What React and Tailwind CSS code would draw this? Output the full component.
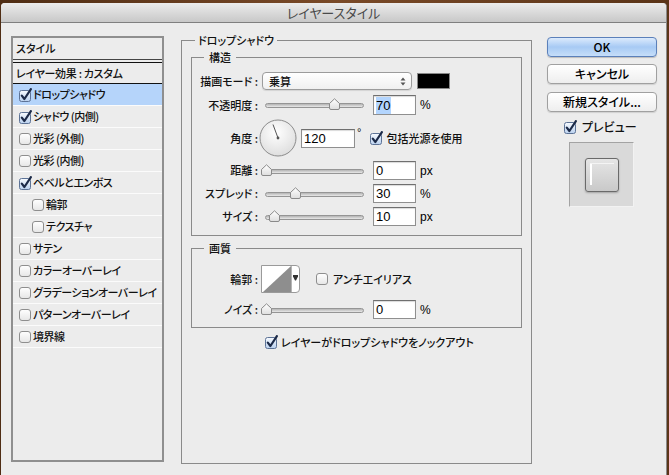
import React from "react";

function CheckOn() {
  return (
    <svg width="14" height="14" viewBox="0 0 14 14" className="shrink-0">
      <defs>
        <linearGradient id="cbOn" x1="0" y1="0" x2="0" y2="1">
          <stop offset="0" stopColor="#f8fbff" />
          <stop offset="1" stopColor="#b9d0ee" />
        </linearGradient>
      </defs>
      <rect x="0.5" y="2.5" width="11" height="11" rx="2" fill="url(#cbOn)" stroke="#5d7396" />
      <path d="M2.8 7.6 L5.4 11 L11.9 1.1" fill="none" stroke="#1c2a48" strokeWidth="2.2" strokeLinecap="round" strokeLinejoin="round" />
    </svg>
  );
}

function CheckOff() {
  return (
    <svg width="12" height="12" viewBox="0 0 12 12" className="shrink-0">
      <defs>
        <linearGradient id="cbOff" x1="0" y1="0" x2="0" y2="1">
          <stop offset="0" stopColor="#ffffff" />
          <stop offset="1" stopColor="#e6e6e6" />
        </linearGradient>
      </defs>
      <rect x="0.5" y="0.5" width="11" height="11" rx="2.5" fill="url(#cbOff)" stroke="#8e8e8e" />
    </svg>
  );
}

function Slider({ thumb }) {
  return (
    <div className="relative h-[12px] w-[107px] shrink-0">
      <div className="absolute left-[4px] right-[4px] top-[4px] h-[5px] rounded-full border border-[#959595] bg-gradient-to-b from-[#b4b4b4] to-[#e9e9e9]" />
      <svg className={"absolute top-[-1px] " + thumb} width="11" height="12" viewBox="0 0 11 12">
        <defs>
          <linearGradient id="thg" x1="0" y1="0" x2="0" y2="1">
            <stop offset="0" stopColor="#ffffff" />
            <stop offset="1" stopColor="#dedede" />
          </linearGradient>
        </defs>
        <path d="M0.5 5.5 L5.5 0.8 L10.5 5.5 L10.5 10 Q10.5 11.5 9 11.5 L2 11.5 Q0.5 11.5 0.5 10 Z" fill="url(#thg)" stroke="#8a8a8a" />
      </svg>
    </div>
  );
}

function NumInput({ children, w = "w-[43px]", h = "h-[19px]" }) {
  return (
    <div className={"flex shrink-0 items-center border border-[#8f8f8f] border-t-[#6f6f6f] bg-white pl-[2px] font-['Liberation_Sans',Arial,sans-serif] text-[13px] leading-none text-black shadow-[inset_0_1px_1px_rgba(0,0,0,0.15)] " + w + " " + h}>
      {children}
    </div>
  );
}

function Unit({ children }) {
  return <span className="ml-[4px] font-['Liberation_Sans',Arial,sans-serif] text-[12px] text-black">{children}</span>;
}

function Label({ children }) {
  return <div className="w-[66px] shrink-0 whitespace-nowrap text-right text-[11px] font-medium leading-none">{children}</div>;
}

function SliderRow({ label, thumb, value, unit, mt = "mt-[4px]" }) {
  return (
    <div className={"flex h-[19px] items-center " + mt}>
      <Label>{label}</Label>
      <div className="ml-[3px]">
        <Slider thumb={thumb} />
      </div>
      <div className="ml-[5px]">
        <NumInput>{value}</NumInput>
      </div>
      <Unit>{unit}</Unit>
    </div>
  );
}

function ListRow({ checked, label, selected, indent }) {
  return (
    <div className={"flex h-[22px] items-center border-b border-[#fbfbfb] " + (selected ? "bg-[#b5d4fa] " : "") + (indent ? "pl-[19px]" : "pl-[6px]")}>
      {checked ? <CheckOn /> : <CheckOff />}
      <span className={"whitespace-nowrap text-[11px] font-medium leading-none tracking-[-0.5px] " + (checked ? "ml-[0px]" : "ml-[2px]")}>{label}</span>
    </div>
  );
}

function Button({ children, primary }) {
  return (
    <div
      className={
        "flex h-[20px] items-center justify-center rounded-[4px] border text-[12px] font-medium leading-none text-black " +
        (primary
          ? "border-[#5b80ba] bg-gradient-to-b from-[#dceafc] via-[#a7caf4] to-[#c6def9] shadow-[0_1px_1px_rgba(0,0,0,0.2)]"
          : "border-[#a0a0a0] bg-gradient-to-b from-white to-[#eeeeee] shadow-[0_1px_1px_rgba(0,0,0,0.12)]")
      }
    >
      {children}
    </div>
  );
}

export default function App() {
  return (
    <div className="h-[475px] w-[669px] overflow-hidden bg-gradient-to-r from-[#4f2d14] via-[#7a4a28] to-[#5a3418] pl-[1px] pr-[2px] pt-[3px] font-['Noto_Sans_CJK_JP',sans-serif] text-[#111] [font-feature-settings:'palt']">
      <div className="flex h-full flex-col rounded-t-[4px] border-r border-[#8a8a8a] bg-[#ececec]">
        <div className="flex h-[20px] shrink-0 items-center justify-center rounded-t-[4px] border-b border-[#7f7f7f] bg-gradient-to-b from-[#ececec] to-[#c8c8c8] text-[13px] leading-none text-[#4a4a4a]">
          レイヤースタイル
        </div>

        <div className="flex items-start">
          {/* Left list panel */}
          <div className="ml-[10px] mt-[13px] h-[426px] w-[153px] shrink-0 border-2 border-[#8f8f8f]">
            <div className="flex h-[21px] items-center pl-[3px] text-[11px] font-medium leading-none">スタイル</div>
            <div className="h-[1px] bg-[#444]" />
            <div className="h-[2px]" />
            <div className="h-[1px] bg-[#111]" />
            <div className="flex h-[21px] items-center whitespace-nowrap border-b border-[#111] pl-[3px] text-[11px] font-medium leading-none tracking-[-0.3px]">
              レイヤー効果 : カスタム
            </div>
            <ListRow checked selected label="ドロップシャドウ" />
            <ListRow checked label="シャドウ (内側)" />
            <ListRow label="光彩 (外側)" />
            <ListRow label="光彩 (内側)" />
            <ListRow checked label="ベベルとエンボス" />
            <ListRow indent label="輪郭" />
            <ListRow indent label="テクスチャ" />
            <ListRow label="サテン" />
            <ListRow label="カラーオーバーレイ" />
            <ListRow label="グラデーションオーバーレイ" />
            <ListRow label="パターンオーバーレイ" />
            <ListRow label="境界線" />
          </div>

          {/* Center */}
          <fieldset className="ml-[17px] mt-[10px] h-[431px] w-[351px] min-w-0 shrink-0 border border-[#8a8a8a] px-[9px]">
            <legend className="ml-[4px] px-[3px] text-[11px] font-medium leading-[14px]">ドロップシャドウ</legend>

            <fieldset className="mt-[3px] min-w-0 border border-[#8a8a8a] pb-[9px]">
              <legend className="ml-[12px] px-[5px] text-[11px] font-medium leading-[14px]">構造</legend>

              <div className="mt-[8px] flex h-[18px] items-center">
                <Label>描画モード :</Label>
                <div className="ml-[4px] flex h-[18px] w-[150px] items-center justify-between rounded-[4px] border border-[#9c9c9c] bg-gradient-to-b from-white to-[#f0f0f0] pl-[6px] pr-[5px] shadow-[0_1px_1px_rgba(0,0,0,0.1)]">
                  <span className="text-[11px] font-medium leading-none">乗算</span>
                  <svg width="6" height="9" viewBox="0 0 6 9">
                    <path d="M0.5 3.5 L3 0.5 L5.5 3.5 Z" fill="#555" />
                    <path d="M0.5 5.5 L3 8.5 L5.5 5.5 Z" fill="#555" />
                  </svg>
                </div>
                <div className="ml-[5px] h-[16px] w-[33px] border border-[#888] bg-black" />
              </div>

              <div className="mt-[5px] flex h-[20px] items-center">
                <Label>不透明度 :</Label>
                <div className="ml-[3px]">
                  <Slider thumb="left-[68px]" />
                </div>
                <div className="ml-[5px]">
                  <NumInput h="h-[20px]">
                    <span className="bg-[#b3d5fe] py-[2px] pr-[1px]">70</span>
                  </NumInput>
                </div>
                <Unit>%</Unit>
              </div>

              <div className="mt-[4px] flex h-[38px] items-center">
                <Label>角度 :</Label>
                <svg className="ml-[1px] shrink-0" width="38" height="38" viewBox="0 0 38 38">
                  <defs>
                    <radialGradient id="dialg" cx="0.45" cy="0.35" r="0.75">
                      <stop offset="0" stopColor="#ffffff" />
                      <stop offset="1" stopColor="#d9d9d9" />
                    </radialGradient>
                  </defs>
                  <circle cx="19" cy="19" r="18" fill="url(#dialg)" stroke="#8c8c8c" />
                  <line x1="19" y1="19" x2="14" y2="5.5" stroke="#555" strokeWidth="1" />
                  <circle cx="19" cy="19" r="1.4" fill="#555" />
                </svg>
                <div className="ml-[4px]">
                  <NumInput w="w-[54px]">120</NumInput>
                </div>
                <span className="ml-[2px] mt-[8px] self-start font-['Liberation_Sans',Arial,sans-serif] text-[11px] leading-none">°</span>
                <div className="ml-[9px] flex items-center">
                  <CheckOn />
                  <span className="ml-[2px] text-[11px] font-medium leading-none">包括光源を使用</span>
                </div>
              </div>

              <SliderRow label="距離 :" thumb="left-[0px]" value="0" unit="px" />
              <SliderRow label="スプレッド :" thumb="left-[29px]" value="30" unit="%" />
              <SliderRow label="サイズ :" thumb="left-[8px]" value="10" unit="px" />
            </fieldset>

            <fieldset className="mt-[5px] min-w-0 border border-[#8a8a8a] pb-[8px]">
              <legend className="ml-[12px] px-[5px] text-[11px] font-medium leading-[14px]">画質</legend>

              <div className="mt-[10px] flex h-[28px] items-center">
                <Label>輪郭 :</Label>
                <div className="ml-[3px] flex h-[28px] w-[39px] shrink-0 rounded-r-[4px] border border-[#9a9a9a] bg-white">
                  <svg width="29" height="26" viewBox="0 0 29 26" className="shrink-0">
                    <rect x="0" y="0" width="29" height="26" fill="#fff" />
                    <polygon points="1,26 29,0 29,26" fill="#8e8e8e" />
                  </svg>
                  <div className="flex flex-1 items-start justify-center border-l border-[#b5b5b5] pt-[9px]">
                    <svg width="5" height="6" viewBox="0 0 5 6">
                      <path d="M0 0 H5 V1.5 L3 5.5 H2 L0 1.5 Z" fill="#333" />
                    </svg>
                  </div>
                </div>
                <div className="ml-[16px] flex items-center">
                  <CheckOff />
                  <span className="ml-[5px] text-[11px] font-medium leading-none">アンチエイリアス</span>
                </div>
              </div>

              <SliderRow label="ノイズ :" thumb="left-[0px]" value="0" unit="%" mt="mt-[7px]" />
            </fieldset>

            <div className="ml-[74px] mt-[7px] flex items-center">
              <CheckOn />
              <span className="ml-[2px] text-[11px] font-medium leading-none">レイヤーがドロップシャドウをノックアウト</span>
            </div>
          </fieldset>

          {/* Right column */}
          <div className="ml-[15px] mt-[14px] flex w-[110px] shrink-0 flex-col">
            <Button primary>OK</Button>
            <div className="mt-[7px]">
              <Button>キャンセル</Button>
            </div>
            <div className="mt-[8px]">
              <Button>新規スタイル...</Button>
            </div>
            <div className="ml-[17px] mt-[8px] flex h-[14px] items-center">
              <CheckOn />
              <span className="ml-[4px] text-[12px] font-medium leading-none">プレビュー</span>
            </div>
            <div className="ml-[22px] mt-[8px] flex h-[65px] w-[65px] items-center justify-center border border-[#a3a3a3] border-b-[#f2f2f2] border-r-[#f2f2f2] bg-[#d9d9d9]">
              <div className="relative h-[34px] w-[34px] rounded-[3px] border border-[#6a6a6a] bg-gradient-to-b from-[#e6e6e6] to-[#c9c9c9] shadow-[0_1px_2px_rgba(0,0,0,0.25)]">
                <div className="absolute left-[4px] top-[4px] h-[22px] w-[2px] bg-white" />
                <div className="absolute left-[4px] right-[4px] top-[4px] h-[1px] bg-[#f4f4f4]" />
              </div>
            </div>
          </div>
        </div>
      </div>
    </div>
  );
}
